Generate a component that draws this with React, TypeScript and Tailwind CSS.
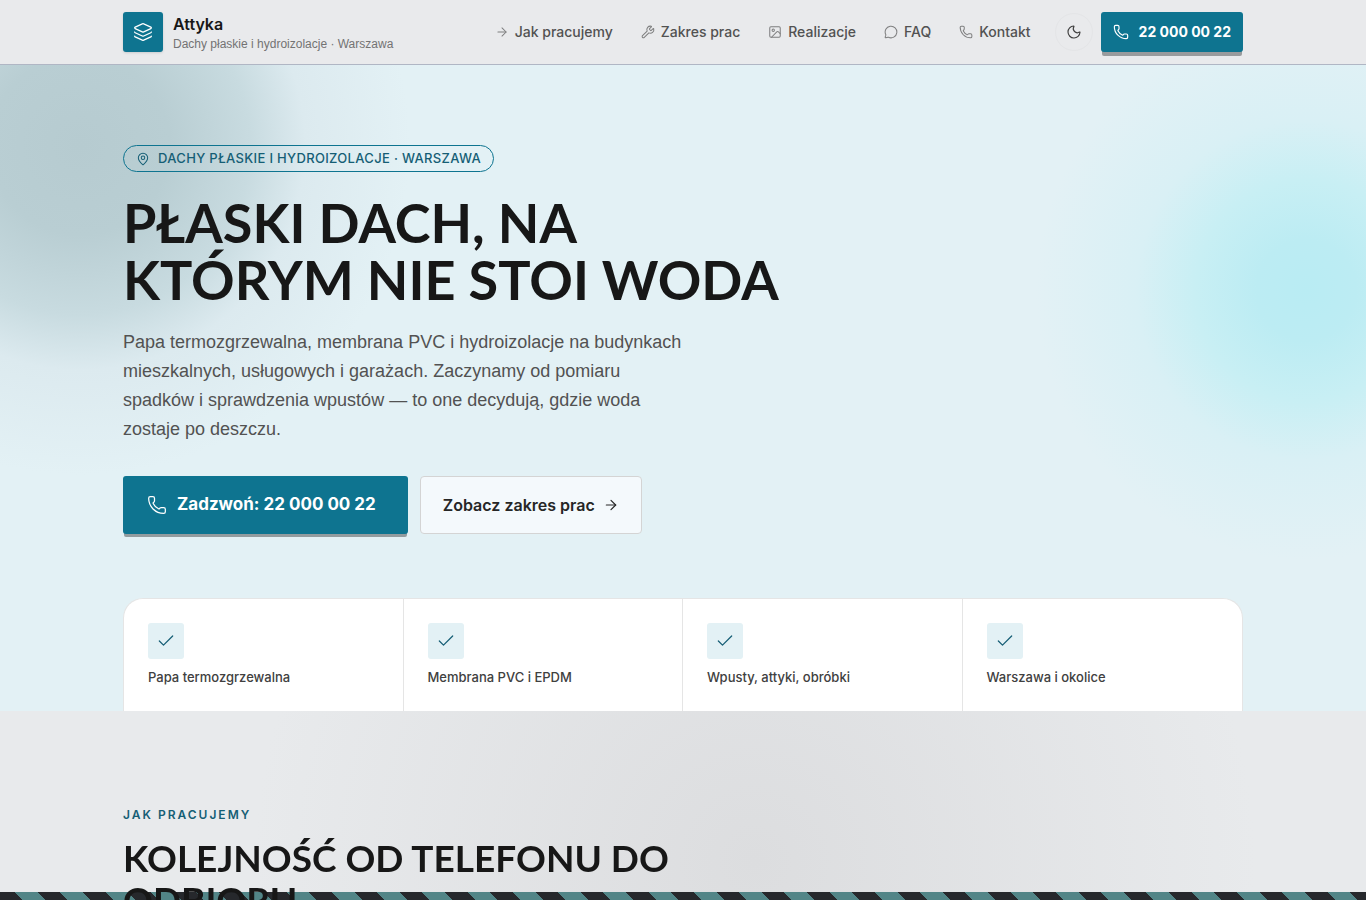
import {
  ArrowRight,
  Check,
  Image,
  Layers,
  MapPin,
  MessageCircle,
  Moon,
  Phone,
  Wrench,
} from 'lucide-react';

const navItems = [
  { label: 'Jak pracujemy', href: '#proces', icon: ArrowRight },
  { label: 'Zakres prac', href: '#zakres', icon: Wrench },
  { label: 'Realizacje', href: '#realizacje', icon: Image },
  { label: 'FAQ', href: '#faq', icon: MessageCircle },
  { label: 'Kontakt', href: '#kontakt', icon: Phone },
];

const features = [
  'Papa termozgrzewalna',
  'Membrana PVC i EPDM',
  'Wpusty, attyki, obróbki',
  'Warszawa i okolice',
];

function Header() {
  return (
    <header className="sticky top-0 z-20 border-b border-[#b0b6c4] bg-[#e9eaec]">
      <div className="mx-auto flex h-16 max-w-6xl items-center justify-between px-4">
        <a href="#top" className="flex items-center gap-2.5">
          <span className="flex size-10 items-center justify-center rounded-[3px] bg-[#0e7490] text-white shadow-sm">
            <Layers size={20} strokeWidth={1.5} />
          </span>
          <span className="flex flex-col">
            <span className="text-base leading-6 font-semibold text-[#171717]">
              Attyka
            </span>
            <span className="font-['Liberation_Sans',sans-serif] text-xs leading-4 text-[#737373]">
              Dachy płaskie i hydroizolacje · Warszawa
            </span>
          </span>
        </a>

        <div className="flex items-center gap-2">
          <nav className="mr-4 flex items-center gap-7">
            {navItems.map(({ label, href, icon: Icon }) => (
              <a
                key={label}
                href={href}
                className="flex items-center gap-1.5 text-sm font-medium text-[#525252]"
              >
                <Icon size={14} strokeWidth={1.75} className="opacity-70" />
                {label}
              </a>
            ))}
          </nav>
          <button
            type="button"
            aria-label="Motyw ciemny"
            className="flex size-[38px] items-center justify-center rounded-full border border-[#e4e5e7] text-[#404040]"
          >
            <Moon size={16} strokeWidth={1.75} />
          </button>
          <a
            href="tel:220000022"
            className="flex h-10 items-center gap-2.5 rounded-[3px] bg-[#0e7490] px-3 text-sm font-bold text-white shadow-[0_5px_0_-1px_#999b9d]"
          >
            <Phone size={16} strokeWidth={1.75} />
            22 000 00 22
          </a>
        </div>
      </div>
    </header>
  );
}

function Hero() {
  return (
    <section className="bg-[#e3f1f5] bg-[radial-gradient(circle_at_80px_80px,#b6cbd0_0px,#b9ced3_90px,#c8dbe0_170px,#dceaef_225px,transparent_330px),radial-gradient(circle_at_calc(100%_-_60px)_225px,#b9ecf3_0px,#bcecf3_50px,#c8eff4_110px,#d9f0f5_170px,transparent_270px)]">
      <div className="mx-auto max-w-6xl px-4 pt-20">
        <p className="flex w-fit items-center gap-2 rounded-full border border-[#0e7490] px-3 py-1 text-[13px] leading-[17px] font-medium tracking-wide text-[#155e75] uppercase">
          <MapPin size={14} strokeWidth={1.75} />
          Dachy płaskie i hydroizolacje · Warszawa
        </p>
        <h1 className="mt-[22px] max-w-3xl font-[Lato,sans-serif] text-[54px] leading-[57px] font-bold text-[#171717] uppercase">
          Płaski dach, na
          <br />
          którym nie stoi woda
        </h1>
        <p className="mt-5 max-w-xl font-['Liberation_Sans',sans-serif] text-lg leading-[29px] text-[#525252]">
          Papa termozgrzewalna, membrana PVC i hydroizolacje na budynkach
          mieszkalnych, usługowych i garażach. Zaczynamy od pomiaru
          <br />
          spadków i sprawdzenia wpustów — to one decydują, gdzie woda zostaje po
          deszczu.
        </p>
        <div className="mt-8 flex gap-3">
          <a
            href="tel:220000022"
            className="flex h-[58px] items-center gap-2.5 rounded-[3px] bg-[#0e7490] pr-8 pl-6 text-[17px] font-bold text-white shadow-[0_4px_0_-1px_#939c9f]"
          >
            <Phone size={20} strokeWidth={1.5} />
            Zadzwoń: 22 000 00 22
          </a>
          <a
            href="#zakres"
            className="flex h-[58px] items-center gap-2 rounded-[4px] border border-[#d4d4d4] bg-[#f4f9fc] px-[22px] text-base font-semibold text-[#262626]"
          >
            Zobacz zakres prac
            <ArrowRight size={16} strokeWidth={1.75} />
          </a>
        </div>
        <ul className="mt-16 grid grid-cols-4 divide-x divide-[#e5e5e5] rounded-t-[20px] border border-b-0 border-[#e5e5e5] bg-white">
          {features.map((feature) => (
            <li key={feature} className="p-6">
              <span className="flex size-9 items-center justify-center rounded-[3px] bg-[#e3f1f5] text-[#155e75]">
                <Check size={20} strokeWidth={1.5} />
              </span>
              <span className="mt-2 block text-[13px] leading-5 font-medium text-[#404040]">
                {feature}
              </span>
            </li>
          ))}
        </ul>
      </div>
    </section>
  );
}

function Process() {
  return (
    <section
      id="proces"
      className="bg-[radial-gradient(circle_at_755px_150px,#dcdddf_0%,#e8eaec_500px)]"
    >
      <div className="mx-auto max-w-6xl px-4 pt-24">
        <p className="text-xs leading-4 font-semibold tracking-[2px] text-[#155e75] uppercase">
          Jak pracujemy
        </p>
        <h2 className="relative z-10 mt-3.5 max-w-xl font-[Lato,sans-serif] text-[37px] leading-[42px] font-bold text-[#171717] uppercase">
          Kolejność od telefonu do odbioru
        </h2>
      </div>
    </section>
  );
}

export default function App() {
  return (
    <div
      id="top"
      className="h-screen overflow-hidden bg-[#e8eaec] font-[Inter,sans-serif]"
    >
      <Header />
      <main>
        <Hero />
        <Process />
      </main>
      <div className="fixed inset-x-0 bottom-0 h-2 bg-[repeating-linear-gradient(45deg,#26282c_0px,#26282c_16px,#528587_16px,#528587_32px)]" />
    </div>
  );
}
